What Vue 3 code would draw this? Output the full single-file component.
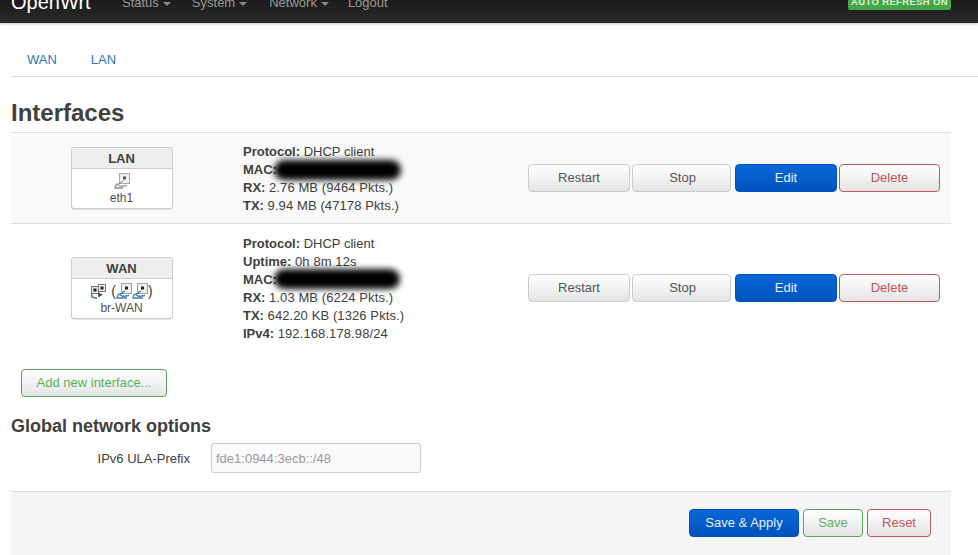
<script setup>
const nav = [
  { label: 'Status', caret: true },
  { label: 'System', caret: true },
  { label: 'Network', caret: true },
  { label: 'Logout', caret: false },
]
const rows = [
  {
    name: 'LAN', device: 'eth1', kind: 'single', tall: false,
    info: [
      ['Protocol:', 'DHCP client'],
      ['MAC:', ''],
      ['RX:', '2.76 MB (9464 Pkts.)'],
      ['TX:', '9.94 MB (47178 Pkts.)'],
    ],
  },
  {
    name: 'WAN', device: 'br-WAN', kind: 'bridge', tall: true,
    info: [
      ['Protocol:', 'DHCP client'],
      ['Uptime:', '0h 8m 12s'],
      ['MAC:', ''],
      ['RX:', '1.03 MB (6224 Pkts.)'],
      ['TX:', '642.20 KB (1326 Pkts.)'],
      ['IPv4:', '192.168.178.98/24'],
    ],
  },
]
const hasDigits = (s) => /\d/.test(s)
</script>

<template>
  <div class="page">
    <header class="navbar">
      <span class="brand">OpenWrt</span>
      <nav class="menu">
        <span v-for="n in nav" :key="n.label" class="menu-item">
          {{ n.label }}<i v-if="n.caret" class="caret"></i>
        </span>
      </nav>
      <span class="badge">AUTO REFRESH ON</span>
    </header>

    <main class="main">
      <div class="tabs">
        <a class="tab">WAN</a>
        <a class="tab">LAN</a>
      </div>

      <h2 class="title">Interfaces</h2>

      <section class="table">
        <div v-for="r in rows" :key="r.name" class="row" :class="{ tall: r.tall }">
          <div class="cell-box">
            <div class="ifbox">
              <div class="ifname">{{ r.name }}</div>
              <div class="ifbody">
                <div class="icons">
                  <template v-if="r.kind === 'single'">
                    <svg class="port" viewBox="0 0 16 16" width="16" height="16">
                      <rect x="5.5" y="0.5" width="10" height="10" fill="#f1f1ec" stroke="#a8a8a8"/>
                      <rect x="9" y="3.5" width="3" height="3" fill="#555"/>
                      <path d="M9 8 L3.5 11.5 L7 13.5 L13 12.5" fill="none" stroke="#9a9a9a" stroke-width="1.3"/>
                      <path d="M2.5 10.5 L1 15 L9 15" fill="none" stroke="#8a8a8a" stroke-width="1.3"/>
                    </svg>
                  </template>
                  <template v-else>
                    <svg class="port" viewBox="0 0 16 16" width="16" height="16">
                      <rect x="1.5" y="3.5" width="7" height="7" fill="#e8e8e8" stroke="#777"/>
                      <rect x="8.5" y="1.5" width="7" height="7" fill="#f0f0f0" stroke="#777"/>
                      <rect x="3.5" y="5.5" width="3" height="3" fill="#222"/>
                      <rect x="10.5" y="3.5" width="3" height="3" fill="#222"/>
                      <path d="M1.5 11 L2 14 L7 15.5" fill="none" stroke="#3f7fb5" stroke-width="1.6"/>
                      <path d="M9 9.5 L9 13 L12 11" fill="none" stroke="#444" stroke-width="1.6"/>
                    </svg>
                    <span class="paren first">(</span>
                    <svg v-for="i in 2" :key="i" class="port" viewBox="0 0 16 16" width="16" height="16">
                      <rect x="5.5" y="0.5" width="10" height="10" fill="#f1f1ec" stroke="#a0a0a0"/>
                      <rect x="9" y="3.5" width="3" height="3" fill="#222"/>
                      <path d="M9 8 L3.5 11.5 L7 13.5 L13 12.5" fill="none" stroke="#3f7fb5" stroke-width="1.3"/>
                      <path d="M2.5 10.5 L1 15 L11 15" fill="none" stroke="#3f7fb5" stroke-width="1.3"/>
                    </svg>
                    <span class="paren last">)</span>
                  </template>
                </div>
                <div class="device">{{ r.device }}</div>
              </div>
            </div>
          </div>

          <div class="cell-info">
            <div v-for="line in r.info" :key="line[0]" class="info-line">
              <b>{{ line[0] }}</b> <span :class="{ num: hasDigits(line[1]) }">{{ line[1] }}</span>
              <span v-if="line[0] === 'MAC:'" class="scribble"></span>
            </div>
          </div>

          <div class="cell-actions">
            <button class="btn plain b-restart">Restart</button>
            <button class="btn plain b-stop">Stop</button>
            <button class="btn primary b-edit">Edit</button>
            <button class="btn danger b-delete">Delete</button>
          </div>
        </div>
      </section>

      <button class="btn add add-new">Add new interface...</button>

      <h3 class="subtitle">Global network options</h3>
      <div class="field">
        <label class="field-label">IPv6 ULA-Prefix</label>
        <input class="field-input" placeholder="fde1:0944:3ecb::/48" />
      </div>

      <footer class="actions">
        <button class="btn primary b-apply">Save &amp; Apply</button>
        <button class="btn add b-save">Save</button>
        <button class="btn danger b-reset">Reset</button>
      </footer>
    </main>
  </div>
</template>

<style>
html, body { margin: 0; background: #fff; overflow: hidden; }
</style>

<style scoped>
.page {
  width: 978px;
  height: 555px;
  overflow: hidden;
  font-family: "Liberation Sans", Arial, sans-serif;
  font-size: 13px;
  color: #404040;
  background: #fff;
}
.navbar {
  height: 23px;
  display: flex;
  align-items: flex-end;
  padding: 0 27px 0 11px;
  background-image: linear-gradient(#1b1b1b, #2a2a2a);
  box-shadow: 0 1px 3px rgba(0, 0, 0, .25);
  overflow: hidden;
  position: relative;
}
.brand {
  font-size: 20px;
  line-height: 24px;
  color: #fff;
  margin-bottom: 9px;
  width: 111px;
  flex: none;
}
.menu {
  display: flex;
  gap: 21px;
  flex: 1;
}
.menu-item {
  font-size: 13px;
  line-height: 16px;
  color: #999;
  margin-bottom: 12px;
  display: flex;
  align-items: center;
}
.menu-item:nth-child(3) { margin-left: 1px; }
.menu-item:last-child { margin-left: -2px; }
.caret {
  display: inline-block;
  margin-left: 4px;
  margin-top: 1px;
  border-left: 4px solid transparent;
  border-right: 4px solid transparent;
  border-top: 4px solid #888;
}
.badge {
  background: #46a546;
  color: #d9f2d3;
  font-size: 9.5px;
  font-weight: bold;
  line-height: 12px;
  padding: 0 3px 2px 3px;
  border-radius: 0 0 2px 2px;
  margin-bottom: 13px;
  letter-spacing: .35px;
}
.main {
  margin: 0 27px 0 11px;
  display: flex;
  flex-direction: column;
}
.tabs {
  margin-right: -27px;
  height: 54px;
  box-sizing: border-box;
  border-bottom: 1px solid #ddd;
  display: flex;
  padding: 29px 0 0 16px;
  gap: 34px;
}
.tab {
  color: #2f74b5;
  font-size: 13px;
  line-height: 16px;
}
.title {
  margin: 22px 0 0;
  font-size: 24px;
  line-height: 28px;
  font-weight: bold;
  color: #404040;
}
.table {
  margin-top: 5px;
  border-top: 1px solid #ddd;
}
.row {
  height: 90px;
  display: flex;
  align-items: center;
  background: #f9f9f9;
  border-bottom: 1px solid #ddd;
}
.row.tall {
  height: 128px;
  background: #fff;
  border-bottom: 0;
}
.cell-box {
  width: 222px;
  flex: none;
  display: flex;
  justify-content: center;
}
.ifbox {
  width: 100px;
  height: 60px;
  border: 1px solid #ccc;
  border-radius: 3px;
  background: #fff;
  box-shadow: 0 1px 1px rgba(0, 0, 0, .1);
  margin-left: -1px;
  text-align: center;
  overflow: hidden;
}
.ifname {
  height: 20px;
  line-height: 21px;
  background: #eee;
  border-bottom: 1px solid #ccc;
  font-weight: bold;
  font-size: 13px;
  color: #404040;
}
.icons {
  height: 16px;
  margin-top: 4px;
  display: flex;
  justify-content: center;
  align-items: center;
}
.port { flex: none; display: block; }
.paren { font-size: 14px; line-height: 16px; }
.paren.first { margin: 0 0 0 5px; }
.paren.last { margin-left: 0; }
.device {
  font-size: 12px;
  line-height: 16px;
  margin-top: 1px;
  color: #505050;
}
.cell-info {
  width: 295px;
  flex: none;
  padding-left: 10px;
  box-sizing: border-box;
  margin-top: 2px;
}
.info-line {
  position: relative;
  line-height: 18px;
  height: 18px;
  white-space: nowrap;
}
.info-line b { color: #404040; }
.num { letter-spacing: .1px; }
.scribble {
  position: absolute;
  left: 31px;
  top: -1px;
  width: 127px;
  height: 20px;
  background: #000;
  border-radius: 10px;
  filter: blur(3px);
}
.row.tall .scribble { left: 31px; width: 126px; top: -2px; }
.cell-actions {
  display: flex;
  align-items: center;
  flex: 1;
}
.btn {
  box-sizing: border-box;
  height: 28px;
  font-family: inherit;
  font-size: 13px;
  padding: 0 0 2px;
  border-radius: 4px;
  cursor: pointer;
  background: linear-gradient(#fff, #e4e4e4);
}
.plain {
  border: 1px solid #ccc;
  color: #555;
}
.primary {
  background: linear-gradient(#0a66d8, #0053bd);
  border: 1px solid #0053bd;
  color: #e6f0fb;
}
.danger {
  border: 1px solid #c05a5f;
  color: #c0555a;
}
.add {
  border: 1px solid #5ba35b;
  color: #5cb060;
}
.b-restart { width: 102px; }
.b-stop { width: 99px; margin-left: 2px; padding-left: 2px; }
.b-edit { width: 102px; margin-left: 4px; }
.b-delete { width: 101px; margin-left: 2px; }
.add-new {
  width: 146px;
  margin: 17px 0 0 10px;
}
.subtitle {
  margin: 18px 0 0;
  font-size: 18px;
  line-height: 22px;
  font-weight: bold;
  color: #404040;
}
.field {
  display: flex;
  align-items: center;
  margin-top: 6px;
}
.field-label {
  width: 200px;
  flex: none;
  text-align: right;
  padding-right: 21px;
  box-sizing: border-box;
  color: #404040;
}
.field-input {
  box-sizing: border-box;
  width: 210px;
  height: 30px;
  border: 1px solid #ccc;
  border-radius: 3px;
  background: #fafafa;
  padding: 0 4px;
  font-family: inherit;
  font-size: 13px;
  outline: none;
}
.field-input::placeholder { color: #999; opacity: 1; }
.actions {
  margin-top: 18px;
  height: 70px;
  box-sizing: border-box;
  background: #f5f5f5;
  border-top: 1px solid #ddd;
  display: flex;
  justify-content: flex-end;
  padding: 17px 20px 0 0;
  align-items: flex-start;
  gap: 4px;
}
.b-apply { width: 110px; }
.b-save { width: 60px; }
.b-reset { width: 64px; }
</style>
